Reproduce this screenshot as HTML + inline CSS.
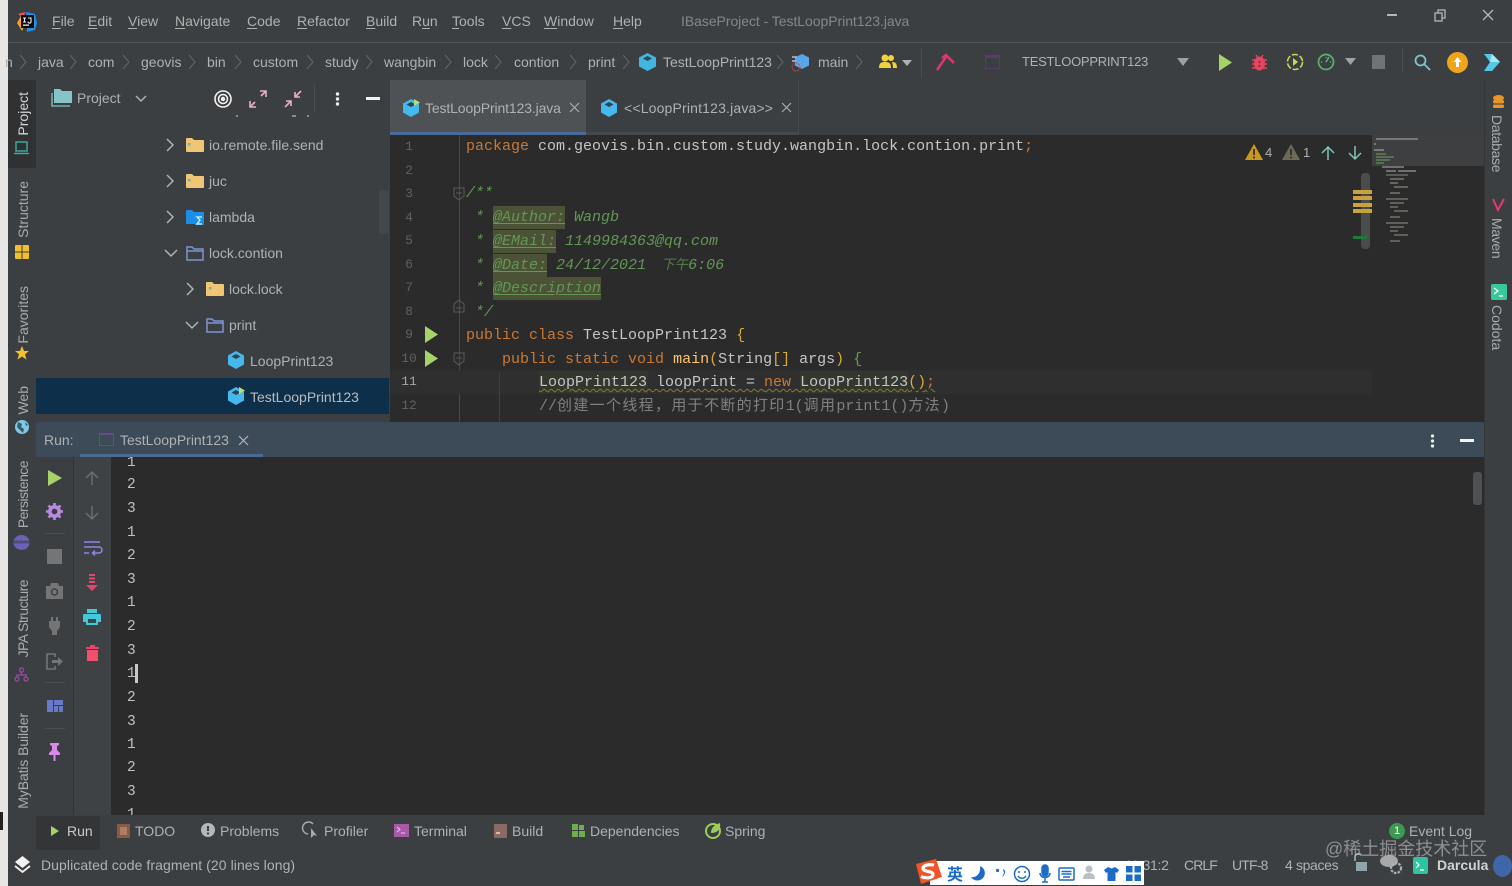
<!DOCTYPE html>
<html><head><meta charset="utf-8"><title>TestLoopPrint123</title>
<style>
*{box-sizing:border-box}
html,body{margin:0;padding:0;width:1512px;height:886px;overflow:hidden;background:#3c3f41}
body{position:relative;font-family:"Liberation Sans","Noto Sans CJK SC",sans-serif;font-size:14px;color:#b4b6b8}
.b{position:absolute}
.t{position:absolute;white-space:nowrap;line-height:20px;color:#afb1b3;margin-top:-1px}
.u{text-decoration:underline;text-underline-offset:2px;text-decoration-thickness:1px}
svg{position:absolute;overflow:visible}
.v{position:absolute;writing-mode:vertical-rl;transform:rotate(180deg);white-space:nowrap;line-height:16px;color:#a9abad;font-size:14px}
.vr{position:absolute;writing-mode:vertical-rl;white-space:nowrap;line-height:16px;color:#a9abad;font-size:14px}
.c{position:absolute;white-space:pre;font-family:"Liberation Mono","Noto Sans CJK SC",monospace;font-size:15px;line-height:20px;color:#c3c6c8}
.n{position:absolute;font-family:"Liberation Mono",monospace;font-size:13px;line-height:16px;color:#5f6264;width:20px;text-align:center}
.o{position:absolute;left:127px;font-family:"Liberation Mono",monospace;font-size:14.5px;line-height:18px;color:#bfc1c3}
.k{color:#cc7832}.g{color:#629755;font-style:italic}.tag{background:#4b5236;color:#629755;font-style:italic;text-decoration:underline;text-underline-offset:2px;padding:3px 0}
.y{color:#d9a93a}
.cj{letter-spacing:1.33px}
.nr{letter-spacing:-.3px}
</style></head><body>

<!-- window edge -->
<div class="b" style="left:0;top:0;width:8px;height:886px;background:#e6e6e6"></div>
<div class="b" style="left:0;top:812px;width:3px;height:18px;background:#222"></div>

<!-- title bar -->
<div class="b" style="left:8px;top:42px;width:1504px;height:1px;background:#545658"></div>
<svg style="left:16px;top:11px" width="22" height="22" viewBox="0 0 22 22">
<path d="M2 3 L9 1 L8 8 Z" fill="#f04e5e"/><path d="M10 1 L19 3 L21 12 L19 19 L11 21 Z" fill="#1f8fe8"/><path d="M1 12 L6 3 L10 12 L6 20 Z" fill="#f8a21e"/>
<rect x="5" y="4" width="13" height="13" fill="#0c0c0c"/><rect x="7" y="13.5" width="6" height="1.3" fill="#eee"/><path d="M7 7h3M8.5 7v4M7 11h3M12 7h3v3.5a1 1 0 0 1-3 .2" stroke="#eee" stroke-width="1.1" fill="none"/></svg>
<span class="t" style="left:52px;top:12px"><span class="u">F</span>ile</span>
<span class="t" style="left:88px;top:12px"><span class="u">E</span>dit</span>
<span class="t" style="left:128px;top:12px"><span class="u">V</span>iew</span>
<span class="t" style="left:175px;top:12px"><span class="u">N</span>avigate</span>
<span class="t" style="left:247px;top:12px"><span class="u">C</span>ode</span>
<span class="t" style="left:297px;top:12px"><span class="u">R</span>efactor</span>
<span class="t" style="left:366px;top:12px"><span class="u">B</span>uild</span>
<span class="t" style="left:412px;top:12px">R<span class="u">u</span>n</span>
<span class="t" style="left:452px;top:12px"><span class="u">T</span>ools</span>
<span class="t" style="left:502px;top:12px"><span class="u">V</span>CS</span>
<span class="t" style="left:544px;top:12px"><span class="u">W</span>indow</span>
<span class="t" style="left:613px;top:12px"><span class="u">H</span>elp</span>
<span class="t" style="left:681px;top:12px;color:#85878a;letter-spacing:-.05px">IBaseProject - TestLoopPrint123.java</span>
<div class="b" style="left:1387px;top:14px;width:10px;height:2px;background:#b5b7b9"></div>
<svg style="left:1434px;top:9px" width="13" height="13" viewBox="0 0 13 13" fill="none" stroke="#b5b7b9" stroke-width="1.3"><rect x="1" y="4" width="7" height="8"/><path d="M4 4V1h7v8H8"/></svg>
<svg style="left:1482px;top:9px" width="12" height="12" viewBox="0 0 12 12" stroke="#b5b7b9" stroke-width="1.3"><path d="M1 1l10 10M11 1L1 11"/></svg>

<!-- breadcrumb / toolbar -->
<span class="t" style="left:5px;top:53px">n</span>
<span class="t" style="left:38px;top:53px">java</span>
<span class="t" style="left:88px;top:53px">com</span>
<span class="t" style="left:141px;top:53px">geovis</span>
<span class="t" style="left:207px;top:53px">bin</span>
<span class="t" style="left:253px;top:53px">custom</span>
<span class="t" style="left:325px;top:53px">study</span>
<span class="t" style="left:384px;top:53px">wangbin</span>
<span class="t" style="left:463px;top:53px">lock</span>
<span class="t" style="left:514px;top:53px">contion</span>
<span class="t" style="left:588px;top:53px">print</span>
<span class="t" style="left:663px;top:53px">TestLoopPrint123</span>
<span class="t" style="left:818px;top:53px">main</span>
<svg style="left:0;top:0" width="1512" height="80" fill="none" stroke="#626466" stroke-width="1.1">
<path d="M20 55l6 7-6 7M70 55l6 7-6 7M123 55l6 7-6 7M189 55l6 7-6 7M235 55l6 7-6 7M307 55l6 7-6 7M366 55l6 7-6 7M445 55l6 7-6 7M495 55l6 7-6 7M570 55l6 7-6 7M623 55l6 7-6 7M777 55l6 7-6 7M856 55l6 7-6 7"/></svg>
<svg style="left:639px;top:53px" width="17" height="18" viewBox="0 0 17 18"><path d="M8.5 0L17 4.500v9L8.500 18 0 13.500v-9z" fill="#40b6e0"/><path d="M8.500 3l4.500 2.500L8.500 8 4 5.500z" fill="#2b4a5a"/></svg>
<svg style="left:791px;top:54px" width="20" height="18" viewBox="0 0 20 18"><path d="M11 0l7 3.500v8L11 15l-7-3.500v-8z" fill="#5aa6ea"/><path d="M1 3h5M1 7h4" stroke="#b9b9d8" stroke-width="1.500"/><circle cx="5" cy="13" r="4" fill="none" stroke="#c44" stroke-width="1" stroke-dasharray="2 1"/></svg>
<svg style="left:879px;top:54px" width="34" height="16" viewBox="0 0 34 16"><circle cx="6" cy="4" r="3.500" fill="#f2d33c"/><circle cx="12" cy="4" r="3" fill="#f2d33c"/><path d="M0 14c0-5 2-6 6-6s6 1 6 6zM13 8c3 0 5 1 5 6h-4c0-3-.5-4.500-1-6z" fill="#f2d33c"/><path d="M23 6h10l-5 6z" fill="#afb1b3"/></svg>
<div class="b" style="left:921px;top:48px;width:1px;height:30px;background:#4b4d4f"></div>
<svg style="left:935px;top:53px" width="20" height="18" viewBox="0 0 20 18" fill="none" stroke="#d8386e" stroke-width="2.500"><path d="M2 17L11 4"/><path d="M7 5l4-3 8 8"/></svg>
<div class="b" style="left:985px;top:55px;width:15px;height:14px;border:1px solid #5a3a6a;border-top-width:3px"></div>
<span class="t" style="left:1022px;top:53px;font-size:13px;letter-spacing:-.25px">TESTLOOPPRINT123</span>
<svg style="left:1177px;top:58px" width="12" height="8"><path d="M0 0h12L6 8z" fill="#9d9fa1"/></svg>
<svg style="left:1218px;top:54px" width="14" height="17"><path d="M1 0l13 8.500L1 17z" fill="#a5d36a"/></svg>
<svg style="left:1252px;top:54px" width="15" height="17" viewBox="0 0 15 17"><ellipse cx="7.500" cy="9.500" rx="5.500" ry="7" fill="#e9455f"/><path d="M0 6h15M0 10h15M0 14h15M4 1l2 3M11 1L9 4" stroke="#e9455f" stroke-width="1.400"/><circle cx="7.500" cy="8" r="1" fill="#3c3f41"/><circle cx="7.500" cy="12" r="1" fill="#3c3f41"/></svg>
<svg style="left:1286px;top:53px" width="18" height="18" viewBox="0 0 18 18" fill="none"><circle cx="9" cy="9" r="7.500" stroke="#c9d65a" stroke-width="1.600" stroke-dasharray="6 2"/><path d="M7 5l5 4-5 4z" fill="#c9d65a"/></svg>
<svg style="left:1317px;top:53px" width="18" height="18" viewBox="0 0 18 18" fill="none"><circle cx="9" cy="9" r="7.500" stroke="#57b56a" stroke-width="1.700"/><path d="M9 9l3-5M4 9h1M13 9h1M9 4v1" stroke="#57b56a" stroke-width="1.500"/></svg>
<svg style="left:1345px;top:58px" width="11" height="7"><path d="M0 0h11L5.500 7z" fill="#a0a2a4"/></svg>
<div class="b" style="left:1372px;top:55px;width:13px;height:14px;background:#707274"></div>
<div class="b" style="left:1402px;top:48px;width:1px;height:24px;background:#4b4d4f"></div>
<svg style="left:1414px;top:54px" width="17" height="17" fill="none" stroke="#7cc5c8" stroke-width="1.800"><circle cx="6.500" cy="6.500" r="5"/><path d="M10 10l6 6"/></svg>
<svg style="left:1447px;top:52px" width="21" height="21" viewBox="0 0 21 21"><circle cx="10.500" cy="10.500" r="10.500" fill="#f0a41a"/><path d="M10.500 5l4 5h-2.500v5h-3v-5H6.500z" fill="#fff"/></svg>
<svg style="left:1483px;top:53px" width="20" height="19" viewBox="0 0 20 19"><path d="M1 1l8 0 8 8-8 9-8 0 6-9z" fill="#54c8e8"/><path d="M9 1l8 8H7z" fill="#a8e8f0"/></svg>

<!-- left strip -->
<div class="b" style="left:8px;top:80px;width:28px;height:88px;background:#2f3133"></div>
<span class="v" style="left:15px;top:92px;color:#d6d6d6">Project</span>
<svg style="left:14px;top:141px" width="16" height="14" fill="none" stroke="#3ca99a" stroke-width="1.500"><rect x="2" y="1" width="11" height="9"/><path d="M0 12.500h15"/></svg>
<span class="v" style="left:15px;top:181px">Structure</span>
<svg style="left:15px;top:245px" width="14" height="14"><rect width="14" height="14" rx="1" fill="#f0c02c"/><path d="M0 7h14M7 0v14" stroke="#3c3f41"/></svg>
<span class="v" style="left:15px;top:286px">Favorites</span>
<svg style="left:15px;top:346px" width="14" height="14" viewBox="0 0 14 14"><path d="M7 0l2 5h5l-4 3.300 1.500 5.300L7 10.500l-4.500 3.100L4 8.300 0 5h5z" fill="#f2c22e"/></svg>
<span class="v" style="left:15px;top:386px">Web</span>
<svg style="left:15px;top:420px" width="14" height="14"><circle cx="7" cy="7" r="7" fill="#7ec8e8"/><path d="M3 2l4 2-1 3 3 2-1 4-3-3-3-3zM10 2l3 3-2 1z" fill="#3c5a6a"/></svg>
<span class="v" style="left:15px;top:461px;letter-spacing:-.55px">Persistence</span>
<svg style="left:13px;top:535px" width="17" height="15"><ellipse cx="8.500" cy="7.500" rx="8" ry="7.500" fill="#6a62b8"/><rect y="5.500" width="17" height="3" fill="#3c3f41" opacity=".6"/></svg>
<span class="v" style="left:15px;top:580px;letter-spacing:-.55px">JPA Structure</span>
<svg style="left:14px;top:667px" width="15" height="15" fill="none" stroke="#8a4a9a" stroke-width="1.500"><circle cx="7.500" cy="3" r="2"/><circle cx="3" cy="12" r="2"/><circle cx="12" cy="12" r="2"/><path d="M7.500 5v3M3 10V8h9v2"/></svg>
<span class="v" style="left:15px;top:713px;letter-spacing:-.1px">MyBatis Builder</span>

<!-- project panel -->
<svg style="left:51px;top:88px" width="22" height="19" viewBox="0 0 22 19"><path d="M3 1h6l2 2h10v12H3z" fill="#86c4c8"/><path d="M1 5v13h18" stroke="#86c4c8" stroke-width="1.300" fill="none"/></svg>
<span class="t" style="left:77px;top:89px">Project</span>
<svg style="left:135px;top:95px" width="12" height="8" fill="none" stroke="#afb1b3" stroke-width="1.500"><path d="M1 1l5 5 5-5"/></svg>
<svg style="left:214px;top:90px" width="18" height="18" fill="none" stroke="#f2f2f2" stroke-width="1.600"><circle cx="9" cy="9" r="8"/><circle cx="9" cy="9" r="4.500"/><circle cx="9" cy="9" r="1.400" fill="#f2f2f2"/></svg>
<svg style="left:249px;top:90px" width="18" height="18" fill="none" stroke="#e8b0c4" stroke-width="1.600"><path d="M1 17l5-5M1 11v6h6M17 1l-5 5M11 1h6v6"/></svg>
<svg style="left:284px;top:90px" width="18" height="18" fill="none" stroke="#e8b0c4" stroke-width="1.600"><path d="M1 17l6-6M2 11h5v5M17 1l-6 6M11 2v5h5"/></svg>
<div class="b" style="left:314px;top:86px;width:1px;height:26px;background:#4b4d4f"></div>
<svg style="left:335px;top:92px" width="5" height="14" fill="#eee"><circle cx="2.500" cy="2" r="1.700"/><circle cx="2.500" cy="7" r="1.700"/><circle cx="2.500" cy="12" r="1.700"/></svg>
<div class="b" style="left:366px;top:97px;width:14px;height:3px;background:#f2f2f2"></div>
<div class="b" style="left:236px;top:115px;width:2px;height:2px;background:#8a8c8e"></div>
<div class="b" style="left:292px;top:115px;width:4px;height:2px;background:#8a8c8e"></div>
<div class="b" style="left:307px;top:115px;width:2px;height:2px;background:#8a8c8e"></div>

<svg style="left:0;top:0" width="400" height="420" fill="none" stroke="#afb1b3" stroke-width="1.500">
<path d="M167 139l6 6-6 6M167 175l6 6-6 6M167 211l6 6-6 6M165 250l6 6 6-6M187 283l6 6-6 6M186 322l6 6 6-6"/></svg>
<svg style="left:186px;top:137px" width="18" height="16"><path d="M0 2a1 1 0 0 1 1-1h5l2 2h9a1 1 0 0 1 1 1v10a1 1 0 0 1-1 1H1a1 1 0 0 1-1-1z" fill="#f0c674"/><rect x="2" y="6" width="2.500" height="2.500" fill="#6ab5b8"/></svg>
<svg style="left:186px;top:173px" width="18" height="16"><path d="M0 2a1 1 0 0 1 1-1h5l2 2h9a1 1 0 0 1 1 1v10a1 1 0 0 1-1 1H1a1 1 0 0 1-1-1z" fill="#f0c674"/><rect x="2" y="6" width="2.500" height="2.500" fill="#6ab5b8"/></svg>
<svg style="left:186px;top:209px" width="18" height="16"><path d="M0 2a1 1 0 0 1 1-1h5l2 2h9a1 1 0 0 1 1 1v10a1 1 0 0 1-1 1H1a1 1 0 0 1-1-1z" fill="#1b8fe8"/><rect x="9" y="7" width="9" height="9" fill="#1b8fe8"/><path d="M16 8h-5l3 3-3 4h5" stroke="#d8f4f8" stroke-width="1.300" fill="none"/></svg>
<svg style="left:186px;top:245px" width="18" height="16" fill="none" stroke="#7c96d6" stroke-width="1.500"><path d="M1 2h5l2 2h9v11H1zM1 6h16"/></svg>
<svg style="left:206px;top:281px" width="18" height="16"><path d="M0 2a1 1 0 0 1 1-1h5l2 2h9a1 1 0 0 1 1 1v10a1 1 0 0 1-1 1H1a1 1 0 0 1-1-1z" fill="#f0c674"/><rect x="3" y="6" width="2.500" height="2.500" fill="#6ab5b8"/></svg>
<svg style="left:206px;top:317px" width="18" height="16" fill="none" stroke="#7c96d6" stroke-width="1.500"><path d="M1 2h5l2 2h9v11H1zM1 6h16"/></svg>
<svg style="left:228px;top:351px" width="16" height="18" viewBox="0 0 16 18"><path d="M8 0l8 4.500v9L8 18l-8-4.500v-9z" fill="#45b8ee"/><path d="M8 3l4.500 2.500L8 8 3.500 5.500z" fill="#2c4552"/></svg>
<span class="t" style="left:209px;top:136px">io.remote.file.send</span>
<span class="t" style="left:209px;top:172px">juc</span>
<span class="t" style="left:209px;top:208px">lambda</span>
<span class="t" style="left:209px;top:244px">lock.contion</span>
<span class="t" style="left:229px;top:280px">lock.lock</span>
<span class="t" style="left:229px;top:316px">print</span>
<span class="t" style="left:250px;top:352px">LoopPrint123</span>
<div class="b" style="left:36px;top:378px;width:353px;height:36px;background:#0d2f4a"></div>
<svg style="left:228px;top:387px" width="18" height="18" viewBox="0 0 18 18"><path d="M8 0l8 4.500v9L8 18l-8-4.500v-9z" fill="#45b8ee"/><path d="M8 3l4.500 2.500L8 8 3.500 5.500z" fill="#2c4552"/><path d="M11 0l6 3.500L11 7z" fill="#b8dc70"/></svg>
<span class="t" style="left:250px;top:388px;color:#b8bcbe">TestLoopPrint123</span>
<div class="b" style="left:379px;top:190px;width:10px;height:44px;background:#43484c"></div>

<!-- tabs -->
<div class="b" style="left:390px;top:80px;width:196px;height:55px;background:#4e5254"></div>
<div class="b" style="left:390px;top:132px;width:196px;height:3px;background:#4a6a9c"></div>
<div class="b" style="left:586px;top:132px;width:212px;height:3px;background:#46494b"></div>
<div class="b" style="left:798px;top:80px;width:1px;height:55px;background:#47494b"></div>
<svg style="left:403px;top:99px" width="17" height="18" viewBox="0 0 17 18"><path d="M8 0l8 4.500v9L8 18l-8-4.500v-9z" fill="#45b8ee"/><path d="M8 3l4.500 2.500L8 8 3.500 5.500z" fill="#2c4552"/><path d="M11 0l6 3.500L11 7z" fill="#b8dc70"/></svg>
<span class="t" style="left:425px;top:99px;letter-spacing:-.13px">TestLoopPrint123.java</span>
<svg style="left:570px;top:103px" width="9" height="9" stroke="#a9abad" stroke-width="1.200"><path d="M0 0l9 9M9 0L0 9"/></svg>
<svg style="left:601px;top:99px" width="16" height="18" viewBox="0 0 16 18"><path d="M8 0l8 4.500v9L8 18l-8-4.500v-9z" fill="#45b8ee"/><path d="M8 3l4.500 2.500L8 8 3.500 5.500z" fill="#2c4552"/></svg>
<span class="t" style="left:624px;top:99px;letter-spacing:.17px">&lt;&lt;LoopPrint123.java&gt;&gt;</span>
<svg style="left:782px;top:103px" width="9" height="9" stroke="#a9abad" stroke-width="1.200"><path d="M0 0l9 9M9 0L0 9"/></svg>

<!-- editor -->
<div class="b" style="left:390px;top:135px;width:1094px;height:287px;background:#2b2b2b"></div>
<div class="b" style="left:459px;top:135px;width:1px;height:287px;background:#48494a"></div>
<div class="b" style="left:390px;top:370px;width:982px;height:24px;background:#2f2f2f"></div>
<div class="n" style="left:399px;top:139px">1</div>
<div class="n" style="left:399px;top:163px">2</div>
<div class="n" style="left:399px;top:186px">3</div>
<div class="n" style="left:399px;top:210px">4</div>
<div class="n" style="left:399px;top:233px">5</div>
<div class="n" style="left:399px;top:257px">6</div>
<div class="n" style="left:399px;top:280px">7</div>
<div class="n" style="left:399px;top:304px">8</div>
<div class="n" style="left:399px;top:327px">9</div>
<div class="n" style="left:399px;top:351px">10</div>
<div class="n" style="left:399px;top:374px;color:#a4a6a8">11</div>
<div class="n" style="left:399px;top:398px">12</div>
<svg style="left:425px;top:326px" width="13" height="17"><path d="M0 0l13 8.500L0 17z" fill="#a5d36a"/></svg>
<svg style="left:425px;top:350px" width="13" height="17"><path d="M0 0l13 8.500L0 17z" fill="#a5d36a"/></svg>
<svg style="left:0;top:0" width="480" height="380" fill="none" stroke="#5a5c5e"><path d="M454 188h10v8l-5 4-5-4zM456 193h6M454 312h10v-8l-5-4-5 4zM456 308h6M454 353h10v8l-5 4-5-4zM456 358h6"/></svg>
<div class="b" style="left:499px;top:372px;width:1px;height:50px;background:#3f4041"></div>

<div class="b" style="left:539px;top:371px;width:109px;height:22px;background:#33372e"></div>
<div class="b" style="left:800px;top:371px;width:108px;height:22px;background:#33372e"></div>
<div class="c" style="left:466px;top:137px"><span class="k">package</span> com.geovis.bin.custom.study.wangbin.lock.contion.print<span class="k">;</span></div>
<div class="c g" style="left:466px;top:184px">/**</div>
<div class="c g" style="left:466px;top:208px"> * <span class="tag">@Author:</span> Wangb</div>
<div class="c g" style="left:466px;top:232px"> * <span class="tag">@EMail:</span> 1149984363@qq.com</div>
<div class="c g" style="left:466px;top:256px"> * <span class="tag">@Date:</span> 24/12/2021 <span style="margin-left:6px;font-size:13.5px;opacity:.75">下午</span>6:06</div>
<div class="c g" style="left:466px;top:279px"> * <span class="tag">@Description</span></div>
<div class="c g" style="left:466px;top:303px"> */</div>
<div class="c" style="left:466px;top:326px"><span class="k">public class</span> TestLoopPrint123 <span class="y">{</span></div>
<div class="c" style="left:466px;top:350px">    <span class="k">public static void</span> <span style="color:#ffc66d">main</span><span class="y">(</span>String<span class="y">[]</span> args<span class="y">)</span> <span style="color:#6a9a4a">{</span></div>
<div class="c" style="left:539px;top:373px;text-decoration:underline wavy #8a7a2a;text-underline-offset:2px;text-decoration-thickness:1px">LoopPrint123 loopPrint = <span class="k">new</span> LoopPrint123<span class="y">()</span><span class="k">;</span></div>
<div class="c" style="left:539px;top:397px;color:#808080">//<span class="cj">创建一个线程，用于不断的打印</span>1(<span class="cj">调用</span>print1()<span class="cj">方法</span>)</div>

<!-- inspection widget -->
<svg style="left:1245px;top:144px" width="18" height="17"><path d="M9 0l9 16H0z" fill="#c9991e"/><path d="M9 5v6M9 12.500v2" stroke="#3a3020" stroke-width="1.800"/></svg>
<span class="t" style="left:1265px;top:144px;font-size:13px">4</span>
<svg style="left:1282px;top:144px" width="18" height="17"><path d="M9 0l9 16H0z" fill="#6e6a55"/><path d="M9 5v6M9 12.500v2" stroke="#2f2e28" stroke-width="1.800"/></svg>
<span class="t" style="left:1303px;top:144px;font-size:13px">1</span>
<svg style="left:1321px;top:146px" width="14" height="14" fill="none" stroke="#7cc8b8" stroke-width="1.500"><path d="M7 14V1M1 7l6-6 6 6"/></svg>
<svg style="left:1348px;top:146px" width="14" height="14" fill="none" stroke="#7cc8b8" stroke-width="1.500"><path d="M7 0v13M1 7l6 6 6-6"/></svg>

<!-- minimap -->
<div class="b" style="left:1372px;top:135px;width:112px;height:31px;background:#3d3f40"></div>
<div class="b" style="left:1361px;top:173px;width:9px;height:76px;border-radius:4px;background:#4b4c4c"></div>
<div class="b" style="left:1353px;top:190px;width:19px;height:4px;background:#c9a23a"></div>
<div class="b" style="left:1353px;top:196px;width:19px;height:4px;background:#c9a23a"></div>
<div class="b" style="left:1353px;top:203px;width:19px;height:4px;background:#c9a23a"></div>
<div class="b" style="left:1353px;top:209px;width:19px;height:4px;background:#c9a23a"></div>
<div class="b" style="left:1353px;top:236px;width:14px;height:3px;background:#1e7a3a"></div>
<svg style="left:1372px;top:135px" width="112" height="120" stroke-width="1.300" fill="none">
<path d="M4 4h42M2 9h2M2 15h10" stroke="#9a9a9a"/><path d="M4 19h10M4 22h18M4 25h14M4 28h8" stroke="#6a8a5a"/>
<path d="M10 32h22M14 36h10M26 36h18" stroke="#999"/><path d="M14 40h22" stroke="#777"/><path d="M18 44h14M18 48h8M22 52h14M18 58h10" stroke="#8a8a80"/>
<path d="M14 64h22M18 68h14M18 72h8M22 76h14M18 82h10" stroke="#808078"/><path d="M14 88h22M18 92h14M18 96h8M22 100h14M18 106h10" stroke="#808078"/></svg>

<!-- right strip -->
<div class="b" style="left:1484px;top:80px;width:1px;height:735px;background:#333537"></div>
<svg style="left:1492px;top:95px" width="13" height="15"><ellipse cx="6.500" cy="3" rx="5.500" ry="3" fill="#e8962a"/><rect x="1" y="5" width="11" height="3.500" rx="1.500" fill="#e8962a"/><rect x="1" y="9.500" width="11" height="3.500" rx="1.500" fill="#e8962a"/></svg>
<span class="vr" style="left:1489px;top:115px;letter-spacing:-.35px">Database</span>
<svg style="left:1492px;top:198px" width="13" height="14" fill="none" stroke="#e8386e" stroke-width="2"><path d="M1 1l5 11 6-11"/></svg>
<span class="vr" style="left:1489px;top:218px;letter-spacing:-.35px">Maven</span>
<svg style="left:1491px;top:284px" width="16" height="16"><rect width="16" height="16" rx="2" fill="#3cc79a"/><path d="M3 4l4 3-4 3M8 12h4" stroke="#fff" stroke-width="1.200" fill="none"/></svg>
<span class="vr" style="left:1489px;top:305px">Codota</span>

<!-- run panel header -->
<div class="b" style="left:36px;top:422px;width:1448px;height:35px;background:#3d4a58"></div>
<div class="b" style="left:80px;top:454px;width:183px;height:3px;background:#4a6a94"></div>
<span class="t" style="left:44px;top:431px">Run:</span>
<div class="b" style="left:99px;top:433px;width:15px;height:13px;border:1px solid #6a4a88;border-top-width:2px"></div>
<span class="t" style="left:120px;top:431px">TestLoopPrint123</span>
<svg style="left:239px;top:436px" width="9" height="9" stroke="#b5b7b9" stroke-width="1.200"><path d="M0 0l9 9M9 0L0 9"/></svg>
<svg style="left:1430px;top:434px" width="5" height="14" fill="#eee"><circle cx="2.500" cy="2" r="1.600"/><circle cx="2.500" cy="7" r="1.600"/><circle cx="2.500" cy="12" r="1.600"/></svg>
<div class="b" style="left:1460px;top:439px;width:14px;height:3px;background:#f2f2f2"></div>

<!-- run toolbar -->
<div class="b" style="left:73px;top:457px;width:1px;height:358px;background:#333537"></div>
<div class="b" style="left:74px;top:457px;width:37px;height:358px;background:#3f4244"></div>
<div class="b" style="left:111px;top:457px;width:1373px;height:358px;background:#2b2b2b"></div>
<svg style="left:48px;top:470px" width="14" height="16"><path d="M0 0l14 8L0 16z" fill="#a5d36a"/></svg>
<svg style="left:46px;top:503px" width="17" height="17" viewBox="0 0 17 17"><circle cx="8.500" cy="8.500" r="4.700" fill="none" stroke="#b88ae0" stroke-width="3.600"/><path d="M8.500 0v3M8.500 14v3M0 8.500h3M14 8.500h3M2.500 2.500l2 2M12.500 12.500l2 2M14.500 2.500l-2 2M4.500 12.500l-2 2" stroke="#b88ae0" stroke-width="2.600"/></svg>
<div class="b" style="left:44px;top:533px;width:21px;height:1px;background:#4c4e50"></div>
<div class="b" style="left:47px;top:549px;width:15px;height:15px;background:#737577"></div>
<svg style="left:46px;top:583px" width="17" height="16"><path d="M0 3h4l1-3h7l1 3h4v13H0z" fill="#737577"/><circle cx="8.500" cy="9" r="3" fill="none" stroke="#3c3f41" stroke-width="1.500"/></svg>
<svg style="left:49px;top:617px" width="11" height="18"><path d="M2 0h2v4H2zM7 0h2v4H7zM0 4h11v6l-3 4v4H3v-4l-3-4z" fill="#737577"/></svg>
<svg style="left:46px;top:653px" width="18" height="17" fill="none" stroke="#737577" stroke-width="1.600"><path d="M9 4V1H1v15h8v-3"/><path d="M6 7h6V4l5 4.500-5 4.500v-3H6z" fill="#737577" stroke="none"/></svg>
<div class="b" style="left:44px;top:682px;width:21px;height:1px;background:#4c4e50"></div>
<svg style="left:47px;top:700px" width="16" height="12" fill="#6a78c8"><rect width="6" height="12"/><rect x="7" width="9" height="5"/><rect x="7" y="6" width="4" height="6"/><rect x="12" y="6" width="4" height="6"/></svg>
<div class="b" style="left:44px;top:728px;width:21px;height:1px;background:#4c4e50"></div>
<svg style="left:49px;top:743px" width="11" height="18"><path d="M1 0h9v2L8 3v4l3 3v2H6.500v6h-2v-6H0v-2l3-3V3L1 2z" fill="#d98ae8"/></svg>

<svg style="left:85px;top:471px" width="14" height="14" fill="none" stroke="#6a6c6e" stroke-width="1.500"><path d="M7 14V1M1 7l6-6 6 6"/></svg>
<svg style="left:85px;top:506px" width="14" height="14" fill="none" stroke="#6a6c6e" stroke-width="1.500"><path d="M7 0v13M1 7l6 6 6-6"/></svg>
<svg style="left:84px;top:541px" width="17" height="14" fill="none" stroke="#8a88e8" stroke-width="1.500"><path d="M0 1h16M0 6h15a2.500 2.500 0 0 1 0 6H9M11 9.500L8.500 12l2.500 2.500M0 12h5"/></svg>
<svg style="left:86px;top:574px" width="12" height="17"><path d="M3 0h6v2H3zM3 3.500h6v2H3zM3 7h6v2H3z" fill="#e8456e"/><path d="M0 11h12l-6 6z" fill="#e8456e"/></svg>
<svg style="left:83px;top:609px" width="18" height="16"><path d="M4 0h10v4H4z" fill="#44c8d8"/><path d="M1 5h16a1 1 0 0 1 1 1v7h-3v3H3v-3H0V6a1 1 0 0 1 1-1z" fill="#44c8d8"/><rect x="5" y="10" width="8" height="4" fill="#2c4a52"/></svg>
<svg style="left:86px;top:645px" width="13" height="16"><path d="M0 2h13v2H0zM4 0h5v2H4z" fill="#e8456e"/><path d="M1 5h11v11H1z" fill="#f0506e"/></svg>

<!-- console output -->
<div style="position:absolute;left:111px;top:457px;width:1373px;height:358px;overflow:hidden">
<div class="o" style="left:16px;top:-3px">1</div>
<div class="o" style="left:16px;top:19px">2</div>
<div class="o" style="left:16px;top:43px">3</div>
<div class="o" style="left:16px;top:67px">1</div>
<div class="o" style="left:16px;top:90px">2</div>
<div class="o" style="left:16px;top:114px">3</div>
<div class="o" style="left:16px;top:137px">1</div>
<div class="o" style="left:16px;top:161px">2</div>
<div class="o" style="left:16px;top:185px">3</div>
<div class="o" style="left:16px;top:208px">1</div>
<div class="o" style="left:16px;top:232px">2</div>
<div class="o" style="left:16px;top:256px">3</div>
<div class="o" style="left:16px;top:279px">1</div>
<div class="o" style="left:16px;top:302px">2</div>
<div class="o" style="left:16px;top:326px">3</div>
<div class="o" style="left:16px;top:349px">1</div>
</div>
<div class="b" style="left:135px;top:664px;width:3px;height:19px;background:#c8c8c8"></div>
<div class="b" style="left:1473px;top:472px;width:9px;height:33px;border-radius:3px;background:#4e5052"></div>

<!-- bottom tool bar -->
<div class="b" style="left:36px;top:816px;width:64px;height:34px;background:#333537"></div>
<svg style="left:51px;top:826px" width="8" height="10"><path d="M0 0l8 5-8 5z" fill="#a5d36a"/></svg>
<span class="t" style="left:67px;top:822px;color:#c8cacc">Run</span>
<svg style="left:117px;top:824px" width="13" height="14"><rect width="13" height="14" fill="#8a5a48"/><rect x="3" y="3" width="7" height="8" fill="#d0a080" opacity=".5"/></svg>
<span class="t" style="left:135px;top:822px">TODO</span>
<svg style="left:201px;top:823px" width="14" height="14"><circle cx="7" cy="7" r="7" fill="#b4b6b8"/><path d="M7 3v5M7 9.500v2" stroke="#3c3f41" stroke-width="2"/></svg>
<span class="t" style="left:220px;top:822px">Problems</span>
<svg style="left:303px;top:822px" width="16" height="17" fill="none" stroke="#a8aaac" stroke-width="1.500"><path d="M10 2a6 6 0 1 0-5 10"/><path d="M8 6v10l3-3 3 1z" fill="#a8aaac" stroke="none"/></svg>
<span class="t" style="left:324px;top:822px">Profiler</span>
<svg style="left:394px;top:824px" width="15" height="13"><rect width="15" height="13" fill="#a85aa8"/><path d="M3 3l3 2.500L3 8M7 9h4" stroke="#e8c8e8" fill="none"/></svg>
<span class="t" style="left:414px;top:822px">Terminal</span>
<svg style="left:494px;top:824px" width="13" height="14"><rect width="13" height="14" rx="1" fill="#8a6a62"/><rect x="2" y="8" width="4" height="2" fill="#e8b0a0"/></svg>
<span class="t" style="left:512px;top:822px">Build</span>
<svg style="left:572px;top:824px" width="13" height="13" fill="#6cb04a"><rect width="6" height="6"/><rect x="7" y="1" width="5" height="5"/><rect y="7" width="6" height="6"/><rect x="7" y="7" width="6" height="6"/></svg>
<span class="t" style="left:590px;top:822px">Dependencies</span>
<svg style="left:705px;top:822px" width="16" height="17" viewBox="0 0 16 17"><circle cx="8" cy="9" r="7" fill="none" stroke="#9ccc5a" stroke-width="2"/><path d="M15 1c1 6-2 10-9 10 0-5 3-8 9-10z" fill="#9ccc5a"/></svg>
<span class="t" style="left:725px;top:822px">Spring</span>
<svg style="left:1389px;top:823px" width="16" height="16"><circle cx="8" cy="8" r="8" fill="#3c9a50"/></svg>
<span class="t" style="left:1394px;top:822px;font-size:11px;color:#fff">1</span>
<span class="t" style="left:1409px;top:822px">Event Log</span>

<!-- status bar -->
<svg style="left:14px;top:856px" width="17" height="18"><path d="M8.500 0L16 6l-7.500 6L1 6z" fill="#f2f2f2"/><path d="M1 10l7.500 6L16 10" fill="none" stroke="#f2f2f2" stroke-width="1.800"/></svg>
<span class="t" style="left:41px;top:856px;letter-spacing:.07px">Duplicated code fragment (20 lines long)</span>
<span class="t nr" style="left:1125px;top:856px">11:31:2</span>
<span class="t" style="left:1184px;top:856px;letter-spacing:-.9px">CRLF</span>
<span class="t" style="left:1232px;top:856px;letter-spacing:-.8px">UTF-8</span>
<span class="t nr" style="left:1285px;top:856px;letter-spacing:-.35px">4 spaces</span>
<svg style="left:1353px;top:853px" width="15" height="19" fill="none"><path d="M2 8V4a3.500 3.500 0 0 1 6.500-1.500" stroke="#a8b8bc" stroke-width="1.500"/><rect x="3" y="9" width="11" height="9" fill="#8fa5aa"/></svg>
<svg style="left:1379px;top:853px" width="24" height="22"><ellipse cx="10" cy="8" rx="9" ry="6" fill="#a6a8aa"/><circle cx="17" cy="15" r="5" fill="none" stroke="#b0b2b4" stroke-width="2.200" stroke-dasharray="2.500 1.200"/></svg>
<svg style="left:1413px;top:857px" width="15" height="17"><rect width="15" height="17" rx="2" fill="#2ec4a0"/><path d="M3 5l3 3-3 3M7 13h4" stroke="#fff" stroke-width="1.200" fill="none"/></svg>
<span class="t" style="left:1437px;top:856px;font-weight:bold;color:#d0d2d4">Darcula</span>
<div class="b" style="left:1493px;top:855px;width:19px;height:22px;border-radius:50%;background:#3e66a8"></div>

<!-- watermark -->
<span class="t" style="left:1325px;top:839px;font-size:18px;line-height:22px;color:rgba(190,192,195,.62)">@稀土掘金技术社区</span>

<!-- IME bar -->
<div class="b" style="left:930px;top:861px;width:214px;height:24px;background:#fff"></div>
<svg style="left:913px;top:858px" width="30" height="27" viewBox="0 0 30 27"><path d="M3 6l20-5 6 18-21 7z" fill="#f0552a"/><path d="M21 7c-4-1-11 0-11 3.500s10 2 10 6-8 4-12 2" fill="none" stroke="#fff" stroke-width="3.200"/></svg>
<span class="t" style="left:947px;top:864px;color:#1a6cc8;font-size:16px;font-weight:bold;line-height:20px;font-family:'Noto Sans CJK SC',sans-serif">英</span>
<svg style="left:971px;top:866px" width="15" height="15"><path d="M9 0a7.500 7.500 0 1 1-9 11C6 12 10 7 9 0z" fill="#1a6cc8"/></svg>
<svg style="left:995px;top:868px" width="12" height="11" fill="#1a6cc8"><circle cx="2.500" cy="2.500" r="1.600"/><path d="M8 1c3 1 3 5-1 8l2-4z"/></svg>
<svg style="left:1013px;top:865px" width="18" height="18" fill="none" stroke="#1a6cc8" stroke-width="1.500"><circle cx="9" cy="9" r="7.500"/><path d="M6 6v2M12 6v2M5 11c2 3 6 3 8 0"/></svg>
<svg style="left:1039px;top:865px" width="12" height="18" fill="none" stroke="#1a6cc8" stroke-width="1.500"><rect x="3" y="0" width="6" height="11" rx="3" fill="#1a6cc8"/><path d="M1 8c0 6 10 6 10 0M6 13v4M3 17h6"/></svg>
<svg style="left:1058px;top:867px" width="17" height="14" fill="none" stroke="#1a6cc8" stroke-width="1.500"><rect x="1" y="1" width="15" height="12" rx="1"/><path d="M3.500 4.500h10M3.500 7h10M5 10h7"/></svg>
<svg style="left:1082px;top:865px" width="17" height="18"><circle cx="7" cy="4" r="3.500" fill="#b8c0c8"/><path d="M1 14c0-5 3-6 6-6s6 1 6 6z" fill="#b8c0c8"/></svg>
<svg style="left:1104px;top:867px" width="15" height="14"><path d="M4 0l3.500 1.500L11 0l4 3-2 3-1.500-1v9h-8V5L2 6 0 3z" fill="#1a6cc8"/></svg>
<svg style="left:1126px;top:866px" width="15" height="15" fill="#1a6cc8"><rect width="6.500" height="6.500"/><rect x="8.500" width="6.500" height="6.500"/><rect y="8.500" width="6.500" height="6.500"/><rect x="8.500" y="8.500" width="6.500" height="6.500"/></svg>

</body></html>
